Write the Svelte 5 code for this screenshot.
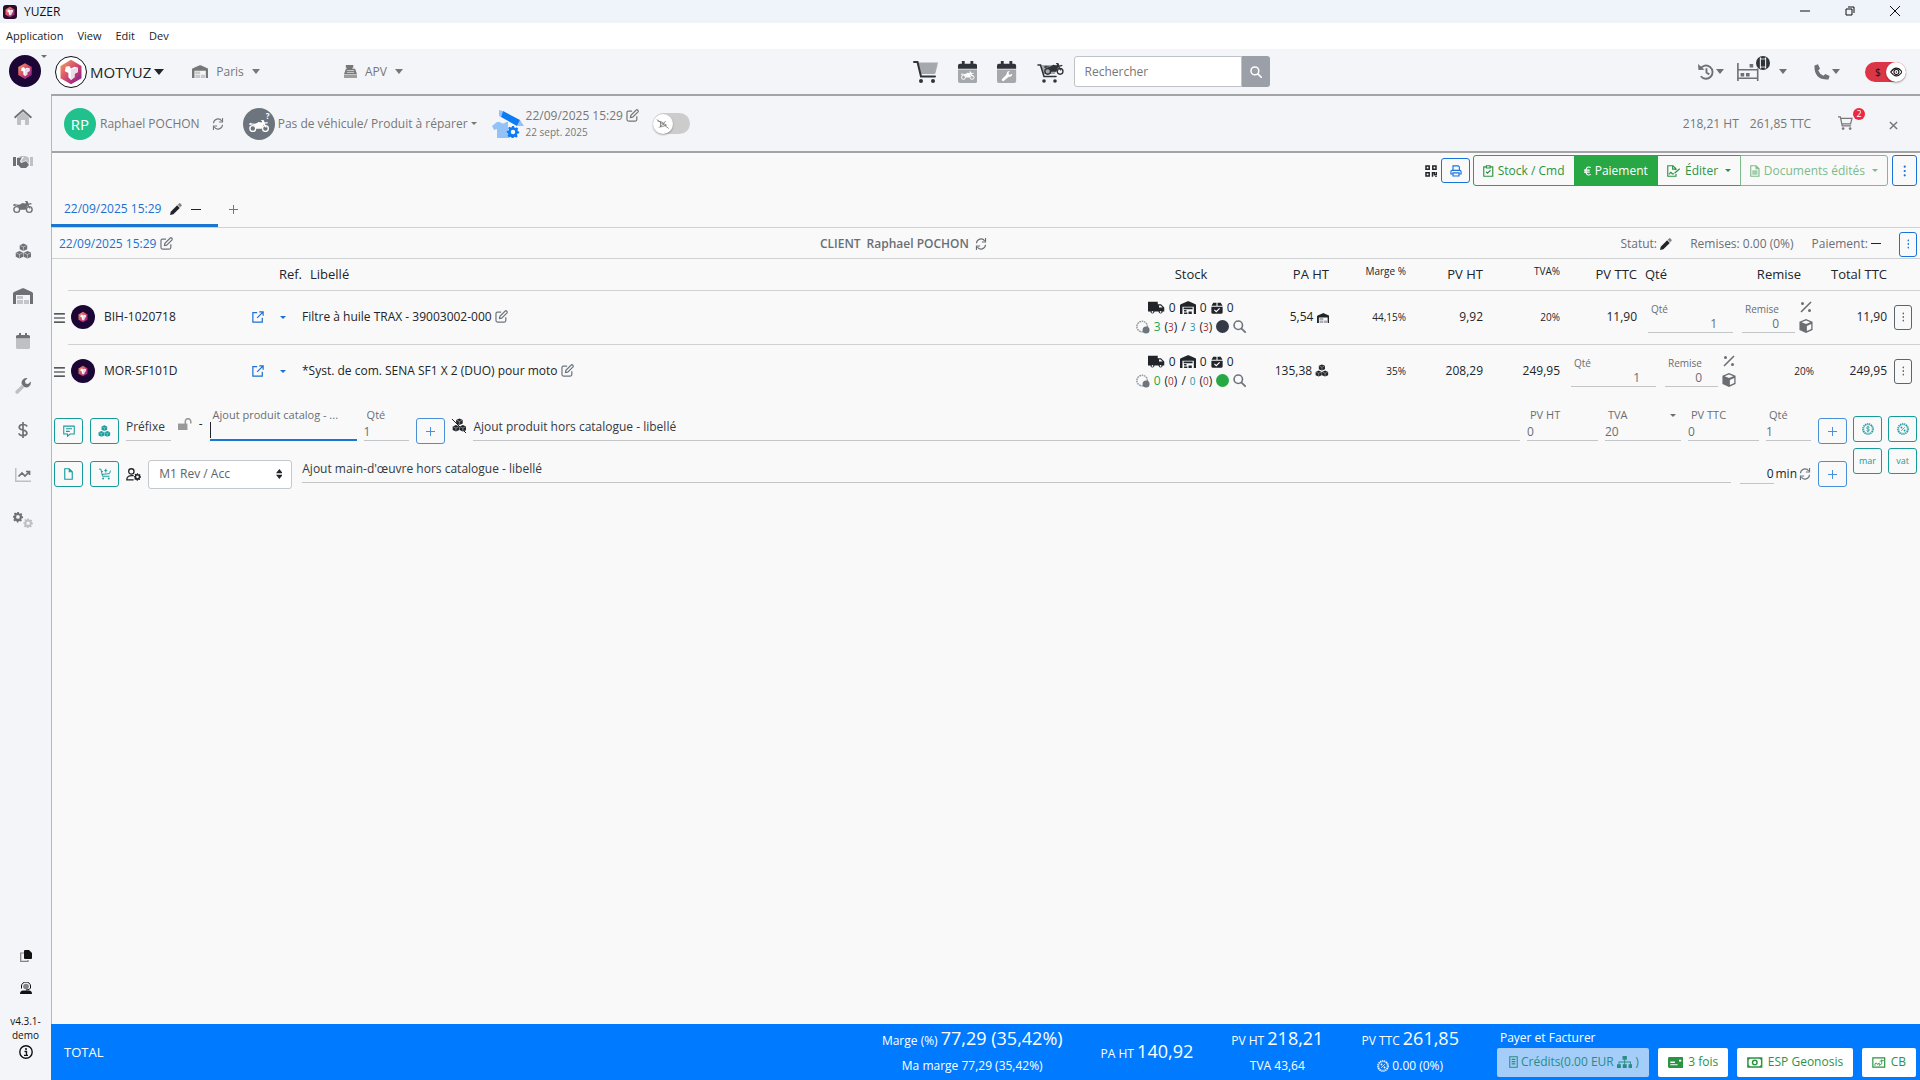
<script lang="ts">
    type Line = {
        ref: string;
        label: string;
        stock: string;
        ordered: string;
        dot: string;
        cost: string;
        costIcon: string;
        margin: string;
        priceHt: string;
        vat: string;
        priceTtc: string;
        shifted: boolean;
    };

    const LINES: Line[] = [
        { ref: 'BIH-1020718', label: 'Filtre à huile TRAX - 39003002-000', stock: '3', ordered: '3', dot: 'dark', cost: '5,54', costIcon: 'warehouseDuo', margin: '44,15%', priceHt: '9,92', vat: '20%', priceTtc: '11,90', shifted: false },
        { ref: 'MOR-SF101D', label: '*Syst. de com. SENA SF1 X 2 (DUO) pour moto', stock: '0', ordered: '0', dot: 'green', cost: '135,38', costIcon: 'boxes', margin: '35%', priceHt: '208,29', vat: '20%', priceTtc: '249,95', shifted: true }
    ];

    const NAV = [
        { icon: 'home', label: 'Accueil' },
        { icon: 'handshake', label: 'Clients' },
        { icon: 'moto', label: 'Véhicules' },
        { icon: 'boxes', label: 'Produits' },
        { icon: 'warehouseDuo', label: 'Stock' },
        { icon: 'calendar', label: 'Agenda' },
        { icon: 'wrench', label: 'Atelier' },
        { icon: 'dollar', label: 'Caisse' },
        { icon: 'chart', label: 'Statistiques' },
        { icon: 'gears', label: 'Réglages' }
    ];

    const moto = '<g fill="none" stroke="currentColor" stroke-width="2.2"><circle cx="6" cy="13.5" r="4.6"/><circle cx="26" cy="13.5" r="4.6"/></g><path d="M3 5l6 1 3-1 3-2 5 1 1-2-2-1 1-1h3l2 4 4-1 1 2-5 1 3 6h-2l-3-5-3 7H11l-1-4-4-3-5 1-1-2 4-2z"/>';
    const cube = '<path d="M0 2.300L4 .5l4 1.800v4.400L4 8.500 0 6.700z"/><path d="M.7 2.700L4 4.200l3.300-1.500M4 4.200v3.900" fill="none" stroke="#f9f9fa" stroke-width=".5"/>';
    const gear = '<path fill-rule="evenodd" d="M6.700 0h2.600l.5 2.100 1.500.7 1.800-1.100L15 3.600l-1.100 1.800.7 1.500 1.600.4v2.500l-2.400.5-.6 1.500 1.100 1.900-1.900 1.800-1.800-1.100-1.500.6-.5 2H6.300l-.5-2-1.500-.7-1.900 1.200L.7 12.800l1.100-1.900-.6-1.500L-.2 9V6.500l2.200-.6.6-1.400L1.400 2.700 3.300.9l1.800 1.200 1.200-.6zM8 5a3 3 0 100 6 3 3 0 000-6z"/>';
    const warehouseRoof = '<path d="M0 16V5.500Q0 4.500 1 4l8.500-3.700a1.500 1.500 0 011.200 0L19 4q1 .5 1 1.500V16h-3V7H3v9z"/>';
    const ring = '<circle cx="8" cy="8" r="7" fill="none" stroke="currentColor" stroke-width="1.600" stroke-dasharray="1.900 .9"/><circle cx="8" cy="8" r="5.800" fill="none" stroke="currentColor" stroke-width=".8"/>';

    const ICONS: Record<string, [string, string]> = {
        home: ['0 0 18 16', '<path opacity=".4" d="M3 8.500L9 3l6 5.500V15q0 1-1 1h-3v-5H7v5H4q-1 0-1-1z"/><path d="M9 0l9 8-1.200 1.400L9 2.500 1.200 9.400 0 8z"/>'],
        handshake: ['0 0 20 12', '<path d="M0 1h3v9H0z"/><path opacity=".4" d="M17 1h3v9h-3zM4 2l4-2 3 1-3 4 2 1 3-2 3 4V2l-3-2H9L6 2z"/><path d="M4 2h2l3-1-2 4 1 2 3-1 2-1 3 4-3 3H8L5 9H4z"/>'],
        moto: ['0 0 32 19', moto],
        boxes: ['0 0 18 17', `<g transform="translate(5 0)">${cube}</g><g transform="translate(.8 8)">${cube}</g><g transform="translate(9.200 8)">${cube}</g>`],
        warehouseDuo: ['0 0 20 16', warehouseRoof + '<path opacity=".35" d="M4 8h6v3H4zM4 12h6v4H4zM11 12h5v4h-5z"/>'],
        warehouse: ['0 0 20 16', warehouseRoof + '<path d="M4.500 8h11v2h-11zM5 11h3v2H5zM5 14h4v2H5zM10.500 13h4v3h-4z"/>'],
        calendar: ['0 0 14 16', '<path opacity=".4" d="M0 6h14v8.500Q14 16 12.500 16h-11Q0 16 0 14.500z"/><path d="M3 0h2v2h4V0h2v2h1.500Q14 2 14 3.500V5.500H0v-2Q0 2 1.500 2H3z"/>'],
        wrench: ['0 0 16 16', '<path opacity=".4" d="M.6 13L7 6.700 9.500 9 3.200 15.400A1.800 1.800 0 01.6 13z"/><path d="M15.700 3.600A4.600 4.600 0 019.500 9L7 6.600A4.600 4.600 0 0112.500.3L10 2.800l.5 2.700 2.700.5z"/>'],
        dollar: ['0 0 10 16', '<path d="M5 0v16M9 4.500Q8.500 2.500 5 2.500T1.200 5.200Q1.200 7.200 5 8t3.900 3Q8.900 13.500 5 13.500T1 11.200" fill="none" stroke="currentColor" stroke-width="1.700"/>'],
        chart: ['0 0 16 16', '<path opacity=".4" d="M0 1h1.500v12.500H16V15H0z"/><path d="M3.500 9.500L7 6l3 3 4-4M11 4.500h3.500V8" fill="none" stroke="currentColor" stroke-width="1.700"/>'],
        gears: ['0 0 20 16', `<g transform="scale(.62)">${gear}</g><g opacity=".4" transform="translate(10.500 6.500) scale(.58)">${gear}</g>`],
        cart: ['0 0 25 22', '<path opacity=".4" d="M5 1.500h20L22.500 12q-.4 1-1.500 1H8z"/><path d="M1 1h3.500L8 15.500h14" fill="none" stroke="currentColor" stroke-width="2" stroke-linecap="round"/><circle cx="8" cy="20" r="2"/><circle cx="20" cy="20" r="2"/>'],
        calMoto: ['0 0 20 23', `<path opacity=".4" d="M0 9h20v12q0 2-2 2H2q-2 0-2-2z"/><path d="M4 0h3v3h6V0h3v3h2q2 0 2 2v3H0V5q0-2 2-2h2z"/><g color="#fff" fill="#fff" transform="translate(3 11) scale(.45)">${moto}</g>`],
        calWrench: ['0 0 20 23', '<path opacity=".4" d="M0 9h20v12q0 2-2 2H2q-2 0-2-2z"/><path d="M4 0h3v3h6V0h3v3h2q2 0 2 2v3H0V5q0-2 2-2h2z"/><path fill="#fff" d="M5 19l5-5q-.2-3.500 3.500-3.500L12 12.500l.5 1.500 1.500.5 2-1.500q0 3.500-3.700 3.500L7 21q-2 .5-2-2z"/>'],
        cartMoto: ['0 0 27 22', `<path opacity=".4" d="M4 4h16l-2 9H6z"/><path d="M1 4h2.500L7 15.500h12" fill="none" stroke="currentColor" stroke-width="1.600" stroke-linecap="round"/><circle cx="7" cy="20" r="1.800"/><circle cx="18" cy="20" r="1.800"/><g transform="translate(7 2) scale(.62)">${moto}</g>`],
        search: ['0 0 16 16', '<circle cx="6.500" cy="6.500" r="5.200" fill="none" stroke="currentColor" stroke-width="2"/><path d="M10.500 10.500L15 15" stroke="currentColor" stroke-width="2.200" stroke-linecap="round"/>'],
        history: ['0 0 17 17', '<path d="M2.500 5A7 7 0 1 1 3 13M9 4.500V9l3 2" fill="none" stroke="currentColor" stroke-width="2"/><path d="M0 0l.5 6.500L7 6z"/>'],
        shelf: ['0 0 24 20', '<path d="M1 0v20M23 6v14M1 7.500h22M1 17h22" fill="none" stroke="currentColor" stroke-width="1.800"/><path d="M4 11h4v4H4zM10 11h4v4h-4zM14 1h4v4h-4z"/>'],
        device: ['0 0 14 14', '<circle cx="7" cy="7" r="7"/><path d="M4.500 1.500v11M9.500 1.500v11" stroke="#f4f5f8" stroke-width="1.300"/><path d="M4.500 3h5v8h-5z" stroke="#f4f5f8" stroke-width=".8"/>'],
        phone: ['0 0 16 16', '<path d="M.5 1.500L4 .3 6 4.700 4.200 6.400Q5.500 9.800 9.500 11.700L11.300 10l4.300 2-1.100 3.500Q0 16.300.5 1.500z"/>'],
        register: ['0 0 14 14', '<path d="M2 0h8v3H9v1h3l2 6H0l2-6h1V3H2z"/><path opacity=".7" d="M0 10.500h14V14H0z"/><path d="M3 6h8M3 8h8" stroke="#f4f5f8" stroke-width=".7"/>'],
        refresh: ['0 0 16 16', '<path d="M2 7a6 6 0 0111-3M14 9a6 6 0 01-11 3" fill="none" stroke="currentColor" stroke-width="1.500"/><path d="M14.800 0v6H9.200v-1.300h4.100V0zM1.200 16v-6h5.600v1.300H2.700V16z"/>'],
        edit: ['0 0 16 16', '<path d="M7.500 2.500H3Q1.200 2.500 1.200 4.300V13q0 1.800 1.800 1.800h8.500q1.800 0 1.800-1.800V9" fill="none" stroke="currentColor" stroke-width="1.500"/><path d="M5.500 10.500L6 7.800 12.600 1.200Q13.600.5 14.500 1.500T14.800 3.500L8.200 10z" fill="none" stroke="currentColor" stroke-width="1.500"/>'],
        pencil: ['0 0 16 16', '<path d="M0 16l1-4.500L9.500 3 13 6.500 4.500 15z"/><path opacity=".55" d="M10.200 2.300L12 .5q1-.8 2 .2l1.200 1.200q1 1.100 0 2.100l-1.700 1.800z"/>'],
        order: ['0 0 32 28', `<path opacity=".42" d="M5 12l-5 4 2 4 3-1v9h11V12h-2q-3 3-6 0z"/><path d="M11 1l17 9-3 6-16-9z"/><path opacity=".42" d="M7 0l4 1-2 6-2-1zM28 10l4 6-7 0z"/><g transform="translate(15 16) scale(.75)">${gear}</g>`],
        noSign: ['0 0 18 16', '<path d="M1 2l16 12M6 5v7l8-2.500L7 5l-5-1M4 13l9-9" fill="none" stroke="currentColor" stroke-width="1.100"/>'],
        cartLine: ['0 0 16 15', '<path d="M0 1h2.500l2 9.500H14M3 2.500h12l-1.500 6H4" fill="none" stroke="currentColor" stroke-width="1.300"/><circle cx="5.500" cy="13.500" r="1.400"/><circle cx="13" cy="13.500" r="1.400"/>'],
        cartPlus: ['0 0 16 16', '<path d="M0 1.500h2.500l2.200 9.500H14M4 8.500l10-1 1.300-4M9 1v5M7 3.500h4M3.300 4.500l2 .1" fill="none" stroke="currentColor" stroke-width="1.300"/><circle cx="5.500" cy="14" r="1.300"/><circle cx="13" cy="14" r="1.300"/>'],
        close: ['0 0 10 10', '<path d="M1 1l8 8M9 1L1 9" stroke="currentColor" stroke-width="1.600"/>'],
        qr: ['0 0 12 12', '<g fill="none" stroke="currentColor" stroke-width="1.500"><path d="M1 1h3.200v3.200H1zM7.800 1H11v3.200H7.800zM1 7.800h3.200V11H1z"/><path d="M7.500 11.800V7.800h2v2H11.500V7M11 11v1"/></g>'],
        print: ['0 0 16 16', '<path d="M4 7V1.200h7l1.500 1.500V7M3.500 12H1.200V9q0-1.800 1.800-1.800h10q1.800 0 1.800 1.800v3h-2.300M4 10.500h8v4.200H4z" fill="none" stroke="currentColor" stroke-width="1.500"/>'],
        clipboard: ['0 0 14 16', '<path d="M4 2.500H1V15h12V2.500h-3M4.500 1h5v3h-5zM4 9l2 2 4-4" fill="none" stroke="currentColor" stroke-width="1.500"/>'],
        fileEdit: ['0 0 19 16', '<path d="M12 12v3H1V1h7l4 4v2M7.500 1v4.500H12" fill="none" stroke="currentColor" stroke-width="1.500"/><path d="M3 12.500q2-4 3-2t3 1M17 5l-7 6" fill="none" stroke="currentColor" stroke-width="1.500"/>'],
        fileLines: ['0 0 13 16', '<path d="M1 1h7l4 4v10H1zM8 1v4h4" fill="none" stroke="currentColor" stroke-width="1.500"/><path d="M3 7h7v6H3z" opacity=".7"/>'],
        dots: ['0 0 4 14', '<circle cx="2" cy="2" r="1.300"/><circle cx="2" cy="7" r="1.300"/><circle cx="2" cy="12" r="1.300"/>'],
        bars: ['0 0 12 11', '<path d="M0 1h12M0 5.500h12M0 10h12" stroke="currentColor" stroke-width="1.300"/>'],
        external: ['0 0 14 14', '<path d="M6 2H1v11h11V8M8.500 1H13v4.500M13 1L6 8" fill="none" stroke="currentColor" stroke-width="1.400"/>'],
        truck: ['0 0 20 16', '<path d="M0 1h12v3h4l4 4v5h-2a2.500 2.500 0 01-5 0H8a2.500 2.500 0 01-5 0H0z"/><path fill="#f9f9fa" d="M13.500 5.500H15.500L18 8h-4.500z"/><circle cx="5.500" cy="13.500" r="1.100" fill="#f9f9fa"/><circle cx="15.500" cy="13.500" r="1.100" fill="#f9f9fa"/>'],
        boxCheck: ['0 0 16 16', '<path d="M3 1h4.300v4H.7zM8.700 1H13l2.300 4H8.700zM.5 6.200h15V14q0 1.500-1.500 1.500H2Q.5 15.500.5 14z"/><path d="M4.500 10.500L7 13l4.500-4.500" fill="none" stroke="#fff" stroke-width="1.600"/>'],
        badgeDuo: ['0 0 16 16', '<circle cx="7" cy="7.500" r="6" fill="none" stroke="currentColor" stroke-width="1.800" stroke-dasharray="1.900 .8" opacity=".7"/><circle cx="11.500" cy="11.500" r="4"/>'],
        percent: ['0 0 12 12', '<path d="M11 1L1 11" stroke="currentColor" stroke-width="1.600"/><circle cx="2.500" cy="2.500" r="1.500"/><circle cx="9.500" cy="9.500" r="1.500"/>'],
        box: ['0 0 16 16', '<path d="M8 0l7.500 3v9.500L8 16 .5 12.500V3z"/><path fill="#f9f9fa" d="M9 8l5-2.200v5.500L9 13.700zM3 3.700L8 1.800l5 1.900-5 2z"/>'],
        comment: ['0 0 16 16', '<path d="M1 1.500h14V12H9.500L6 15v-3H1zM4 5h8M4 8.500h5" fill="none" stroke="currentColor" stroke-width="1.400"/>'],
        lock: ['0 0 16 14', '<path d="M0 6.500h11V14H0z"/><path d="M8.500 7V4a3.200 3.200 0 016.400 0v2.500" fill="none" stroke="currentColor" stroke-width="1.800"/>'],
        file: ['0 0 12 16', '<path d="M1 1h6l4 4v10H1zM7 1v4h4" fill="none" stroke="currentColor" stroke-width="1.500"/>'],
        userGear: ['0 0 20 17', `<circle cx="7" cy="4.500" r="3.500" fill="none" stroke="currentColor" stroke-width="1.700"/><path d="M10 10Q1 9 1 15.500h9" fill="none" stroke="currentColor" stroke-width="1.700"/><g transform="translate(10.500 7) scale(.57)">${gear}</g>`],
        sort: ['0 0 8 12', '<path d="M4 0l4 5H0zM4 12l4-5H0z"/>'],
        badgeDollar: ['0 0 16 16', ring + '<path d="M10 6Q9.500 5 8 5T6.200 6.400 8 8t1.900 1.500T8 11 6 10M8 3.800v8.400" fill="none" stroke="currentColor"/>'],
        badgePercent: ['0 0 16 16', ring + '<path d="M10.500 5.500l-5 5" stroke="currentColor"/><circle cx="6" cy="6" r="1.200"/><circle cx="10" cy="10" r="1.200"/>'],
        copy: ['0 0 12 12', '<path opacity=".5" d="M4 3H.7v8.300H8V10" fill="none" stroke="currentColor" stroke-width="1.200"/><path d="M4 1q0-1 1-1h4l3 3v5q0 1-1 1H5Q4 9 4 8z"/>'],
        support: ['0 0 12 12', '<path d="M1.500 6.500V4a4.500 4 0 019 0v2Q10 8 6 8" fill="none" stroke="currentColor"/><circle cx="6" cy="4.500" r="2.800" opacity=".5"/><path d="M0 12q0-3.500 3-3.500h6q3 0 3 3.500z"/>'],
        info: ['0 0 14 14', '<circle cx="7" cy="7" r="6.200" fill="none" stroke="currentColor" stroke-width="1.400"/><path d="M5.500 6.500h2V10M5 10.300h4" fill="none" stroke="currentColor" stroke-width="1.300"/><circle cx="7" cy="4" r="1"/>'],
        receipt: ['0 0 12 16', '<path d="M1 1h10v14H1zM3.500 4.500h5M3.500 7.500h5M3.500 10.500h5" fill="none" stroke="currentColor" stroke-width="1.400"/>'],
        sitemap: ['0 0 18 14', '<path d="M6.500 0h5v4.500h-5zM0 9.500h4.500V14H0zM6.700 9.500h4.600V14H6.700zM13.500 9.500H18V14h-4.500zM8.500 4h1v6h-1zM1.800 6.500h14.500V10h-1V7.500H2.800V10h-1z"/>'],
        card: ['0 0 17 12', '<path fill-rule="evenodd" d="M1.500 0h14Q17 0 17 1.500v9q0 1.500-1.500 1.500h-14Q0 12 0 10.500v-9Q0 0 1.500 0zM2.500 5v1.500h5V5zM2.500 8v1h8V8zM12 3v2h2.500V3z"/>'],
        cash: ['0 0 17 12', '<path d="M1 1h15v10H1z" fill="none" stroke="currentColor" stroke-width="1.600"/><circle cx="8.500" cy="6" r="2.500" fill="none" stroke="currentColor" stroke-width="1.600"/><path d="M1 1h3L1 4zM16 1h-3l3 3zM1 11h3L1 8zM16 11h-3l3-3z"/>'],
        sign: ['0 0 16 13', '<path d="M1 1h14v11H1z" fill="none" stroke="currentColor" stroke-width="1.400"/><path d="M3.500 10.500V8l2-1 1 2 2-2v3l3-2V3M9 5l5-1" fill="none" stroke="currentColor"/>'],
        eye: ['0 0 18 14', '<path d="M1 7q8-11 16 0-8 11-16 0z" fill="none" stroke="currentColor" stroke-width="1.600"/><circle cx="9" cy="7" r="3.500" fill="none" stroke="currentColor" stroke-width="1.500"/><circle cx="9" cy="7" r="1"/>'],
        euro: ['0 0 10 14', '<path d="M9.500 2Q4 0 2.800 5v4Q4 14 9.500 12M0 5.700h8M0 8.500h8" fill="none" stroke="currentColor" stroke-width="1.600"/>'],
        gem: ['0 0 32 32', '<defs><linearGradient id="gem" x1="0" y1="0" x2="1" y2="1"><stop offset="0" stop-color="#f6a45c"/><stop offset=".5" stop-color="#d4496e"/><stop offset="1" stop-color="#7d1790"/></linearGradient></defs><path fill="url(#gem)" d="M16 2l12 7v14l-12 7L4 23V9z"/><path fill="#fff" d="M10 10l4-1 2 3 4-2 4 1v5l-4 2v4l-4 3-3-3v-5l-4-2z"/><path fill="#e9dce6" d="M16 13l8-2v5l-4 2v4l-4 3z"/>']
    };

    const PAYMENTS = [
        { icon: 'card', label: '3 fois' },
        { icon: 'cash', label: 'ESP Geonosis' },
        { icon: 'sign', label: 'CB' }
    ];
</script>

{#snippet icon(name: string, size = 's14')}
    <svg class="icon {size}" viewBox={ICONS[name][0]} fill="currentColor" aria-hidden="true">{@html ICONS[name][1]}</svg>
{/snippet}

{#snippet field(label: string, value: string, cls: string)}
    <label class="field {cls}">
        <span>{label}</span>
        <input type="text" {value} />
    </label>
{/snippet}

{#snippet amounts()}
    <div class="amounts">
        {@render field('Qté', '1', 'right qty')}
        {@render field('Remise', '0', 'right rebate')}
        <div class="amount-icons">
            {@render icon('percent', 's12')}
            {@render icon('box', 's14')}
        </div>
    </div>
{/snippet}

<div class="app">
    <div class="titlebar">
        <span class="app-badge">{@render icon('gem', 's12')}</span>
        <span>YUZER</span>
        <div class="window-buttons">
            <button aria-label="Réduire"><svg viewBox="0 0 10 10"><path d="M0 5h10" /></svg></button>
            <button aria-label="Agrandir"><svg viewBox="0 0 10 10"><path d="M1 3h6v6H1zM3 1h6v6" /></svg></button>
            <button aria-label="Fermer"><svg viewBox="0 0 10 10"><path d="M0 0l10 10M10 0L0 10" /></svg></button>
        </div>
    </div>
    <nav class="menubar">
        <button>Application</button>
        <button>View</button>
        <button>Edit</button>
        <button>Dev</button>
    </nav>

    <div class="body">
        <aside class="sidebar">
            <button class="brand" aria-label="Yuzer">
                <span class="disc">{@render icon('gem', 's18')}</span>
                <i class="caret small"></i>
            </button>
            <nav class="side-nav">
                {#each NAV as item}
                    <a href="#{item.icon}" aria-label={item.label}>{@render icon(item.icon, 's18')}</a>
                {/each}
            </nav>
            <div class="side-foot">
                {@render icon('copy', 's12')}
                {@render icon('support', 's12')}
                <p>v4.3.1-<br />demo</p>
                {@render icon('info', 's14')}
            </div>
        </aside>

        <div class="main">
            <header class="topbar">
                <div class="top-left">
                    <button class="company">
                        <span class="ring">{@render icon('gem', 's28')}</span>
                        MOTYUZ <i class="caret big"></i>
                    </button>
                    <button class="site">{@render icon('warehouseDuo', 's13')}<span>Paris</span><i class="caret"></i></button>
                    <button class="desk">{@render icon('register', 's13')}<span>APV</span><i class="caret"></i></button>
                </div>
                <div class="top-center">
                    <button aria-label="Vente">{@render icon('cart', 's22')}</button>
                    <button aria-label="Planning véhicule">{@render icon('calMoto', 's22')}</button>
                    <button aria-label="Planning atelier">{@render icon('calWrench', 's22')}</button>
                    <button aria-label="Vente véhicule">{@render icon('cartMoto', 's22')}</button>
                    <form class="search">
                        <input type="text" placeholder="Rechercher" aria-label="Rechercher" />
                        <button type="button" aria-label="Lancer la recherche">{@render icon('search', 's12')}</button>
                    </form>
                </div>
                <div class="top-right">
                    <button aria-label="Historique">{@render icon('history', 's16')}<i class="caret"></i></button>
                    <button class="shelf" aria-label="Rayons">
                        {@render icon('shelf', 's18')}
                        <span class="shelf-badge">{@render icon('device', 's14')}</span>
                        <i class="caret"></i>
                    </button>
                    <button class="phone" aria-label="Téléphone">{@render icon('phone', 's16')}<i class="caret"></i></button>
                    <button class="eye-toggle" aria-label="Afficher les prix">
                        <span>$</span>
                        <b>{@render icon('eye', 's10')}</b>
                    </button>
                </div>
            </header>

            <section class="customer">
                <span class="avatar">RP</span>
                <span class="name">Raphael POCHON</span>
                {@render icon('refresh', 's12')}
                <button class="vehicle">
                    <span class="avatar grey">{@render icon('moto', 's12')}<em>?</em></span>
                    Pas de véhicule/ Produit à réparer <i class="caret small"></i>
                </button>
                <div class="when">
                    <span class="order-icon">{@render icon('order', 's28')}</span>
                    <div>
                        <p>22/09/2025 15:29 {@render icon('edit', 's13')}</p>
                        <small>22 sept. 2025</small>
                    </div>
                </div>
                <button class="switch" aria-label="Signature"><b>{@render icon('noSign', 's12')}</b></button>
                <div class="sums">
                    <span>218,21 HT</span>
                    <span>261,85 TTC</span>
                    <button class="basket" aria-label="Panier">{@render icon('cartLine', 's14')}<b>2</b></button>
                    <button aria-label="Fermer le dossier">{@render icon('close', 's9')}</button>
                </div>
            </section>

            <div class="actions">
                {@render icon('qr', 's12')}
                <button class="btn blue print" aria-label="Imprimer">{@render icon('print', 's12')}</button>
                <div class="btn-group">
                    <button>{@render icon('clipboard', 's12')} Stock / Cmd</button>
                    <button class="filled">{@render icon('euro', 's10')} Paiement</button>
                    <button>{@render icon('fileEdit', 's12')} Éditer <i class="caret small"></i></button>
                    <button class="faded">{@render icon('fileLines', 's12')} Documents édités <i class="caret small"></i></button>
                </div>
                <button class="btn blue more" aria-label="Plus d'actions">{@render icon('dots', 's12')}</button>
            </div>

            <div class="tabs">
                <a class="tab" href="#devis">22/09/2025 15:29 {@render icon('pencil', 's12')} <i class="dash"></i></a>
                <button class="add-tab" aria-label="Ajouter un onglet"></button>
            </div>

            <div class="summary">
                <a href="#date">22/09/2025 15:29 {@render icon('edit', 's13')}</a>
                <div class="client"><b>CLIENT</b><b>Raphael POCHON</b>{@render icon('refresh', 's12')}</div>
                <div class="status">
                    <span>Statut: {@render icon('pencil', 's12')}</span>
                    <span>Remises: 0.00 (0%)</span>
                    <span>Paiement: <i class="dash"></i></span>
                    <button class="btn blue tiny" aria-label="Options">{@render icon('dots', 's10')}</button>
                </div>
            </div>

            <table>
                <colgroup>
                    <col class="c-drag" /><col class="c-logo" /><col class="c-ref" /><col /><col class="c-stock" />
                    <col class="c-cost" /><col class="c-num" /><col class="c-num" /><col class="c-num" /><col class="c-num" />
                    <col class="c-qty" /><col class="c-num" /><col class="c-total" /><col class="c-menu" />
                </colgroup>
                <thead>
                    <tr>
                        <th></th><th></th>
                        <th class="num flush">Ref.</th>
                        <th class="label-head">Libellé</th>
                        <th class="center">Stock</th>
                        <th class="num">PA HT</th>
                        <th class="num mini">Marge %</th>
                        <th class="num">PV HT</th>
                        <th class="num mini">TVA%</th>
                        <th class="num">PV TTC</th>
                        <th class="qty-head">Qté</th>
                        <th class="num rebate-head">Remise</th>
                        <th class="num">Total TTC</th>
                        <th></th>
                    </tr>
                </thead>
                <tbody>
                    {#each LINES as line}
                        <tr>
                            <td>{@render icon('bars', 's10')}</td>
                            <td><span class="disc mid">{@render icon('gem', 's12')}</span></td>
                            <td>
                                <div class="ref">
                                    <span>{line.ref}</span>
                                    <a href="#{line.ref}" aria-label="Ouvrir">{@render icon('external', 's12')}</a>
                                    <i class="caret small azure"></i>
                                </div>
                            </td>
                            <td>{line.label} {@render icon('edit', 's13 muted')}</td>
                            <td class="center stock">
                                <div>{@render icon('truck', 's13')} 0 {@render icon('warehouse', 's13')} 0 {@render icon('boxCheck', 's12')} 0</div>
                                <div>
                                    {@render icon('badgeDuo', 's14 muted')}
                                    <span class="ok">{line.stock}</span>
                                    <span>(<small class="bad">{line.ordered}</small>)</span>
                                    <span>/</span>
                                    <small class="teal">{line.stock}</small>
                                    <span>(<small class="bad">{line.ordered}</small>)</span>
                                    <i class="dot {line.dot}"></i>
                                    {@render icon('search', 's13 muted')}
                                </div>
                            </td>
                            <td class="num">{line.cost} {@render icon(line.costIcon, line.shifted ? 's13' : 's10')}</td>
                            <td class="num tiny-num">{line.margin}</td>
                            <td class="num">{line.priceHt}</td>
                            {#if line.shifted}
                                <td class="num">{line.priceTtc}</td>
                                <td colspan="2">{@render amounts()}</td>
                                <td class="num tiny-num">{line.vat}</td>
                            {:else}
                                <td class="num tiny-num">{line.vat}</td>
                                <td class="num">{line.priceTtc}</td>
                                <td colspan="2">{@render amounts()}</td>
                            {/if}
                            <td class="num">{line.priceTtc}</td>
                            <td><button class="btn dark-line tiny" aria-label="Options de ligne">{@render icon('dots', 's10')}</button></td>
                        </tr>
                    {/each}
                </tbody>
            </table>

            <div class="adders">
                <div class="add-rows">
                    <div class="add-row">
                        <button class="btn teal-line" aria-label="Commentaire">{@render icon('comment', 's12')}</button>
                        <button class="btn teal-line" aria-label="Produits">{@render icon('boxes', 's12')}</button>
                        <input class="line-input prefix" type="text" placeholder="Préfixe" aria-label="Préfixe" />
                        {@render icon('lock', 's12 pale')}
                        <span class="sep">-</span>
                        {@render field('Ajout produit catalog - ...', '', 'catalog')}
                        {@render field('Qté', '1', 'w45')}
                        <button class="btn sky" aria-label="Ajouter le produit"></button>
                        <span class="slashed">{@render icon('boxes', 's14')}</span>
                        <input class="line-input grow" type="text" placeholder="Ajout produit hors catalogue - libellé" aria-label="Libellé produit" />
                        {@render field('PV HT', '0', 'w70')}
                        <label class="field w75">
                            <span>TVA <i class="caret small"></i></span>
                            <input type="text" value="20" />
                        </label>
                        {@render field('PV TTC', '0', 'w70')}
                        {@render field('Qté', '1', 'w45')}
                        <button class="btn sky" aria-label="Ajouter hors catalogue"></button>
                    </div>
                    <div class="add-row second">
                        <button class="btn teal-line" aria-label="Document">{@render icon('file', 's12')}</button>
                        <button class="btn teal-line" aria-label="Panier">{@render icon('cartPlus', 's12')}</button>
                        {@render icon('userGear', 's13')}
                        <div class="select">
                            <select aria-label="Taux horaire"><option>M1 Rev / Acc</option></select>
                            {@render icon('sort', 's10')}
                        </div>
                        <input class="line-input grow" type="text" placeholder="Ajout main-d'œuvre hors catalogue - libellé" aria-label="Libellé main-d'œuvre" />
                        <label class="minutes"><input class="line-input" type="text" value="0" /><span>min</span>{@render icon('refresh', 's12 muted')}</label>
                        <button class="btn sky" aria-label="Ajouter main-d'œuvre"></button>
                    </div>
                </div>
                <div class="quick">
                    <button class="btn teal-line" aria-label="Montant">{@render icon('badgeDollar', 's12')}</button>
                    <button class="btn teal-line" aria-label="Pourcentage">{@render icon('badgePercent', 's12')}</button>
                    <button class="btn teal-line">mar</button>
                    <button class="btn teal-line">vat</button>
                </div>
            </div>

            <footer>
                <span class="total">TOTAL</span>
                <div class="figure"><p>Marge (%) <b>77,29 (35,42%)</b></p><p>Ma marge 77,29 (35,42%)</p></div>
                <div class="figure single"><p>PA HT <b>140,92</b></p></div>
                <div class="figure"><p>PV HT <b>218,21</b></p><p>TVA 43,64</p></div>
                <div class="figure"><p>PV TTC <b>261,85</b></p><p>{@render icon('badgePercent', 's12')} 0.00 (0%)</p></div>
                <div class="pay">
                    <p>Payer et Facturer</p>
                    <div class="pay-row">
                        <button class="credit" disabled>{@render icon('receipt', 's12')} Crédits(0.00 EUR {@render icon('sitemap', 's12')})</button>
                        {#each PAYMENTS as p}
                            <button>{@render icon(p.icon, 's11')} {p.label}</button>
                        {/each}
                    </div>
                </div>
            </footer>
        </div>
    </div>
</div>

<style>
    :global(body) { background: #f9f9fa; }
    .app {
        display: flex;
        flex-direction: column;
        min-height: 100vh;
        font: 12px/18px 'Open Sans', 'Noto Sans', sans-serif;
        color: #212529;
    }
    .app * { box-sizing: border-box; }
    button, input, select { font: inherit; color: inherit; margin: 0; }
    button { background: none; border: 0; padding: 0; cursor: pointer; white-space: nowrap; }
    a { color: #1c70cf; text-decoration: none; }
    p { margin: 0; }
    input { min-width: 0; border-radius: 0; }

    .icon { display: inline-block; vertical-align: -2px; flex: none; width: auto; }
    .s9 { height: 9px; }
    .s10 { height: 10px; }
    .s11 { height: 11px; }
    .s12 { height: 12px; }
    .s13 { height: 13px; }
    .s14 { height: 14px; }
    .s16 { height: 16px; }
    .s18 { height: 18px; }
    .s22 { height: 22px; }
    .s28 { height: 28px; }
    .muted { color: #6c757d; }
    .pale { color: #999; }

    .caret {
        display: inline-block;
        flex: none;
        border: 4px solid transparent;
        border-top: 5px solid currentColor;
        border-bottom: 0;
        vertical-align: 2px;
    }
    .caret.small { border-width: 3px; border-bottom: 0; }
    .caret.big { border-width: 5px; border-top-width: 6px; border-bottom: 0; }
    .azure { color: #1c70cf; }
    .dash { display: inline-block; width: 10px; height: 1px; background: #212529; vertical-align: 4px; }

    .titlebar {
        display: flex;
        align-items: center;
        height: 23px;
        padding-left: 3px;
        gap: 7px;
        background: #eff4fb;
        color: #111;
    }
    .app-badge { display: flex; padding: 1px; border-radius: 3px; background: #2a0b2c; }
    .window-buttons { display: flex; margin: 0 3px 0 auto; }
    .window-buttons button { width: 45px; height: 22px; }
    .window-buttons svg { width: 10px; fill: none; stroke: #111; stroke-width: 1; }
    .menubar {
        display: flex;
        align-items: center;
        gap: 14px;
        height: 26px;
        padding-left: 6px;
        background: #fff;
        font-size: 11px;
    }

    .body { display: flex; flex: 1; }
    .sidebar {
        display: flex;
        flex-direction: column;
        flex: none;
        width: 51px;
        background: #f4f5f8;
        color: #6d7075;
    }
    .brand { display: flex; height: 46px; padding: 6px 0 0 9px; }
    .disc {
        display: flex;
        align-items: center;
        justify-content: center;
        width: 32px;
        height: 32px;
        border-radius: 50%;
        background: #1b0635;
    }
    .disc.mid { width: 24px; height: 24px; margin-left: 3px; }
    .side-nav { display: grid; grid-auto-rows: 1fr; height: 447px; margin-right: 5px; }
    .side-nav a { display: flex; align-items: center; justify-content: center; color: #6d7075; }
    .side-nav .icon { height: 16px; max-width: 20px; }
    .side-foot {
        display: flex;
        flex-direction: column;
        align-items: center;
        margin-top: auto;
        padding-bottom: 21px;
        color: #111;
        font-size: 10px;
        line-height: 14px;
        text-align: center;
    }
    .side-foot > .icon { margin-bottom: 20px; }
    .side-foot p { margin-bottom: 3px; }
    .side-foot > .icon:last-child { margin: 0; }

    .main { display: flex; flex-direction: column; flex: 1; min-width: 0; border-left: 1px solid #b5bab9; }

    .topbar {
        display: grid;
        grid-template-columns: 57fr auto 43fr;
        align-items: center;
        height: 47px;
        background: #f4f5f8;
        border-bottom: 2px solid #a3a4a6;
        margin-left: -1px;
    }
    .top-left { display: flex; align-items: center; padding-left: 4px; color: #777; }
    .top-left button { display: flex; align-items: center; gap: 8px; }
    .top-left .company { gap: 3px; color: #212529; font-size: 15px; width: 137px; }
    .top-left .site { width: 152px; }
    .ring {
        display: flex;
        padding: 1px;
        border: 1px solid #111;
        border-radius: 50%;
        background: #fff;
    }
    .top-center { display: flex; align-items: center; gap: 20px; color: #30343a; }
    .top-center button { display: flex; }
    .search { display: flex; margin-left: -10px; width: 196px; }
    .search input {
        flex: 1;
        height: 31px;
        padding: 0 10px;
        border: 1px solid #bfc3c7;
        border-radius: 3px 0 0 3px;
        background: #fff;
    }
    .search input::placeholder { color: #777; }
    .search button {
        align-items: center;
        justify-content: center;
        width: 28px;
        background: #9a9fa8;
        border-radius: 0 3px 3px 0;
        color: #fff;
    }
    .top-right { display: flex; align-items: center; justify-content: flex-end; padding-right: 14px; color: #6d7075; }
    .top-right > button { display: flex; align-items: center; gap: 2px; }
    .top-right .shelf { position: relative; margin-left: 13px; width: 50px; justify-content: space-between; }
    .shelf-badge { position: absolute; left: 19px; top: -7px; display: flex; color: #30343a; }
    .top-right .phone { margin: 0 25px 0 27px; }
    .top-right .eye-toggle {
        justify-content: space-between;
        width: 41px;
        height: 20px;
        padding-left: 10px;
        border-radius: 10px;
        background: #dc3545;
        color: #111;
        font-size: 10px;
    }
    .eye-toggle b, .switch b {
        display: flex;
        align-items: center;
        justify-content: center;
        flex: none;
        width: 20px;
        height: 20px;
        border-radius: 50%;
        background: #fff;
        box-shadow: 0 1px 2px #0005;
    }

    .customer {
        display: flex;
        align-items: center;
        height: 57px;
        padding: 0 22px 0 12px;
        background: #f4f5f8;
        border-bottom: 2px solid #a3a4a6;
        color: #777;
    }
    .avatar {
        display: flex;
        align-items: center;
        justify-content: center;
        flex: none;
        position: relative;
        width: 32px;
        height: 32px;
        border-radius: 50%;
        background: #20c18d;
        color: #fff;
        font-size: 15px;
    }
    .avatar.grey { background: #6c757d; }
    .avatar.grey .icon { margin-top: 4px; }
    .avatar em { position: absolute; right: 5px; top: 3px; font: bold 8px/10px 'Open Sans', sans-serif; }
    .name { margin: 0 12px 0 4px; }
    .vehicle { display: flex; align-items: center; gap: 3px; margin-left: 19px; }
    .when { display: flex; align-items: center; gap: 2px; margin-left: 15px; line-height: 17px; }
    .when small { display: block; font-size: 10px; }
    .order-icon { display: flex; color: #0d7bf2; }
    .switch { width: 37px; height: 21px; margin-left: 14px; border-radius: 11px; background: #ccc; }
    .sums { display: flex; align-items: center; gap: 11px; margin-left: auto; }
    .basket { position: relative; margin: 0 25px 0 16px; }
    .basket b {
        position: absolute;
        right: -12px;
        top: -7px;
        width: 12px;
        height: 12px;
        border-radius: 50%;
        background: #ee2740;
        color: #fff;
        font: 9px/12px 'Open Sans', sans-serif;
    }

    .actions { display: flex; align-items: center; justify-content: flex-end; gap: 4px; padding: 2px 3px 0 0; }
    .btn {
        display: inline-flex;
        align-items: center;
        justify-content: center;
        flex: none;
        border: 1px solid;
        border-radius: 3px;
    }
    .blue { color: #1a73d9; }
    .print { width: 29px; height: 25px; }
    .more { width: 25px; height: 31px; }
    .tiny { width: 18px; height: 25px; }
    .dark-line { color: #5d646b; }
    .teal-line { width: 29px; height: 26px; color: #169b9d; font-size: 9px; }
    .sky { width: 29px; height: 26px; color: #4a90d9; }
    .sky, .add-tab {
        background:
            linear-gradient(currentColor, currentColor) center / 9px 1px no-repeat,
            linear-gradient(currentColor, currentColor) center / 1px 9px no-repeat;
    }
    .btn-group { display: flex; }
    .btn-group button {
        display: flex;
        align-items: center;
        gap: 4px;
        height: 31px;
        padding: 0 9px;
        border: 1px solid #28a745;
        margin-left: -1px;
        color: #2b9443;
    }
    .btn-group button:first-child { border-radius: 3px 0 0 3px; }
    .btn-group button:last-child { border-radius: 0 3px 3px 0; }
    .btn-group .filled { background: #28a745; color: #fff; }
    .btn-group .faded { color: #7dbb8a; border-color: #7dbb8a; }
    .btn-group .caret { margin-left: 3px; }

    .tabs { display: flex; align-items: stretch; height: 42px; border-bottom: 1px solid #cfd1d3; }
    .tab {
        display: flex;
        align-items: center;
        gap: 9px;
        width: 167px;
        padding: 8px 0 0 13px;
        margin-left: -1px;
        border-bottom: 3px solid #1976d2;
    }
    .tab .icon { color: #212529; }
    .add-tab { align-self: center; width: 11px; height: 11px; margin: 5px 0 0 10px; color: #28a745; }

    .summary {
        display: grid;
        grid-template-columns: 45fr auto 55fr;
        align-items: center;
        height: 31px;
        padding: 2px 3px 0 7px;
        border-bottom: 1px solid #cfd1d3;
        color: #6a6e73;
    }
    .summary a .icon { color: #6c757d; }
    .client { display: flex; align-items: center; gap: 6px; }
    .client b { font-weight: 600; }
    .status { display: flex; align-items: center; justify-content: flex-end; gap: 18px; }
    .status .icon { color: #212529; }
    .status .tiny .icon { color: #1a73d9; }

    table { width: 100%; border-collapse: collapse; table-layout: fixed; }
    .c-drag { width: 16px; }
    .c-logo { width: 35px; }
    .c-ref { width: 199px; }
    .c-stock { width: 146px; }
    .c-cost { width: 70px; }
    .c-num { width: 77px; }
    .c-qty { width: 100px; }
    .c-total { width: 73px; }
    .c-menu { width: 28px; }
    th { height: 31px; padding: 0; font-weight: 400; font-size: 13px; text-align: left; white-space: nowrap; }
    td { height: 54px; padding: 0; white-space: nowrap; }
    tr:last-child td { border-bottom: 0; }
    th, td { border-bottom: 1px solid #cfd1d3; }
    th:first-child, td:first-child { border-bottom: 0; }
    td:first-child { padding-left: 2px; }
    .num { text-align: right; padding-right: 5px; }
    .flush { padding-right: 0; }
    .label-head { padding-left: 8px; }
    .center { text-align: center; }
    .mini { font-size: 10px; vertical-align: top; padding-top: 3px; }
    .tiny-num { font-size: 10px; }
    .qty-head { padding-left: 3px; }
    .rebate-head { padding-right: 18px; }
    td:last-child { padding-left: 2px; }
    .ref { display: flex; align-items: center; gap: 16px; padding-right: 16px; }
    .ref span { flex: 1; padding-left: 1px; }
    .stock div { display: flex; align-items: center; justify-content: center; gap: 4px; height: 19px; }
    .stock small { font-size: 10px; }
    .ok { color: #28a745; }
    .bad { color: #b02a37; }
    .teal { color: #2593a5; }
    .dot { width: 13px; height: 13px; border-radius: 50%; background: #343a46; }
    .dot.green { background: #28a745; }

    .amounts { display: flex; align-items: center; padding-left: 6px; }
    .qty { width: 85px; margin-right: 9px; }
    .rebate { width: 53px; margin-right: 4px; }
    .amount-icons { display: flex; flex-direction: column; align-items: center; gap: 6px; color: #6a6e73; }

    .field { display: flex; flex-direction: column; flex: none; color: #6a6e73; }
    .field span { padding-left: 3px; font-size: 11px; line-height: 14px; white-space: nowrap; }
    .amounts .field span { font-size: 10px; }
    .field input {
        width: 100%;
        height: 19px;
        padding: 0;
        border: 0;
        border-bottom: 1px solid #c3c6c9;
        background: none;
    }
    .field.right input { height: 17px; padding-right: 16px; text-align: right; }
    .field.catalog input {
        border-bottom: 2px solid #1976d2;
        background: linear-gradient(#212529, #212529) 0 0 / 1px 16px no-repeat;
        outline: 0;
    }
    .catalog { width: 147px; }
    .w45 { width: 45px; }
    .w70 { width: 71px; }
    .w75 { width: 76px; }
    .w75 span { display: flex; align-items: center; justify-content: space-between; padding-right: 5px; }

    .adders { display: flex; gap: 6px; padding: 5px 3px 0 2px; }
    .add-rows { flex: 1; min-width: 0; }
    .add-row { display: flex; align-items: flex-end; gap: 7px; height: 38px; }
    .add-row > .btn { margin-bottom: -3px; }
    .add-row > .icon, .sep { align-self: center; margin-top: 4px; }
    .add-row.second { align-items: center; height: 28px; margin-top: 19px; }
    .add-row.second > .icon { margin: 0; }
    .add-row.second > .btn { margin: 0; }
    .line-input {
        height: 28px;
        padding: 0;
        border: 0;
        border-bottom: 1px solid #c3c6c9;
        background: none;
        text-align: left;
    }
    .line-input::placeholder { color: #343a40; opacity: 1; }
    .prefix { width: 45px; }
    .grow { flex: 1; }
    .second > .grow { margin: 0 2px 10px 3px; }
    .slashed {
        align-self: center;
        margin-top: 8px;
        background: linear-gradient(45deg, transparent 47%, #212529 47% 53%, transparent 53%);
        line-height: 16px;
    }
    .select { position: relative; width: 144px; }
    .select select {
        appearance: none;
        width: 100%;
        height: 29px;
        padding: 0 10px;
        border: 1px solid #c3c8cc;
        border-radius: 3px;
        background: #fff;
        color: #5d646b;
    }
    .select .icon { position: absolute; right: 10px; top: 9px; }
    .minutes { display: flex; align-items: center; gap: 2px; }
    .minutes input { width: 34px; height: 20px; text-align: right; }
    .quick { display: grid; grid-template-columns: auto auto; align-content: start; gap: 6px; padding-top: 13px; }

    footer {
        display: flex;
        align-items: center;
        gap: 38px;
        height: 56px;
        margin: auto 0 0 -1px;
        padding: 0 4px 0 13px;
        background: #007bff;
        color: #fff;
        line-height: 25px;
        white-space: nowrap;
    }
    .total { margin-right: auto; font-size: 13px; }
    .figure { text-align: center; }
    .figure b { font-weight: 400; font-size: 18px; }
    .pay { line-height: 20px; }
    .pay > p { padding-left: 3px; }
    .pay-row { display: flex; gap: 9px; }
    .pay-row button {
        display: flex;
        align-items: center;
        gap: 5px;
        height: 29px;
        padding: 0 10px;
        border-radius: 2px;
        background: #fff;
        color: #2b9443;
    }
    .pay-row .credit { background: #a4cef9; color: #288c83; padding: 0 10px 0 12px; gap: 3px; }
</style>
